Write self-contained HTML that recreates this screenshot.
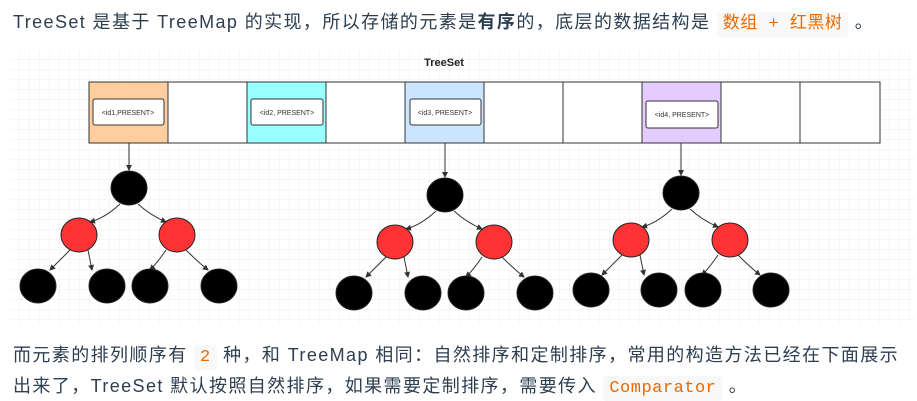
<!DOCTYPE html>
<html><head><meta charset="utf-8"><style>
body{margin:0;width:917px;height:401px;background:#fff;font-family:"Liberation Sans","Noto Sans CJK SC",sans-serif;color:#2c3e50;overflow:hidden;position:relative}
.t{position:absolute;left:13px;font-size:18px;letter-spacing:1.4px;white-space:nowrap}
code{font-family:"Liberation Mono","Noto Sans CJK SC",monospace;color:#e96900;background:#f8f8f8;padding:3px 6px;border-radius:3px;font-size:17px;letter-spacing:0.5px}
</style></head><body>
<div class="t" style="top:8px">TreeSet 是基于 TreeMap 的实现，所以存储的元素是<b>有序</b>的，底层的数据结构是 <code>数组 + 红黑树</code> 。</div>
<svg style="position:absolute;left:0;top:0" width="917" height="401">
<defs><pattern id="g" width="10" height="10" patternUnits="userSpaceOnUse"><path d="M10 0V10M0 10H10" stroke="#ececec" stroke-width="1" fill="none"/></pattern>
<marker id="a" markerWidth="6" markerHeight="6" refX="5" refY="3" orient="auto"><path d="M0,0L6,3L0,6z" fill="#333"/></marker></defs>
<rect x="10" y="51" width="905" height="272" fill="url(#g)"/>
<text x="444" y="66" font-size="11" font-weight="bold" text-anchor="middle" fill="#222" font-family="Liberation Sans">TreeSet</text>
<g stroke="#333" stroke-width="1">
<rect x="89" y="82" width="79" height="61" fill="#ffce9f"/>
<rect x="168" y="82" width="79" height="61" fill="#fff"/>
<rect x="247" y="82" width="79" height="61" fill="#99ffff"/>
<rect x="326" y="82" width="79" height="61" fill="#fff"/>
<rect x="405" y="82" width="79" height="61" fill="#cce5ff"/>
<rect x="484" y="82" width="79" height="61" fill="#fff"/>
<rect x="563" y="82" width="79" height="61" fill="#fff"/>
<rect x="642" y="82" width="79" height="61" fill="#e5ccff"/>
<rect x="721" y="82" width="79" height="61" fill="#fff"/>
<rect x="800" y="82" width="80" height="61" fill="#fff"/>
<rect x="93" y="99" width="71" height="26" rx="2" fill="#fff"/>
<rect x="251" y="99" width="72" height="26" rx="2" fill="#fff"/>
<rect x="410" y="99" width="71" height="26" rx="2" fill="#fff"/>
<rect x="646" y="101" width="72" height="27" rx="2" fill="#fff"/>
</g>
<g font-size="7" fill="#333" text-anchor="middle" font-family="Liberation Sans">
<text x="128" y="115">&lt;id1,PRESENT&gt;</text>
<text x="287" y="115">&lt;id2, PRESENT&gt;</text>
<text x="445" y="115">&lt;id3, PRESENT&gt;</text>
<text x="682" y="117">&lt;id4, PRESENT&gt;</text>
</g>
<g stroke="#333" stroke-width="1" fill="none" marker-end="url(#a)">
<path d="M129 143V170"/><path d="M445 143V177"/><path d="M681 143V175"/>
<path d="M120 204Q105 218 90 222"/><path d="M138 204Q150 215 166 222"/>
<path d="M70 250Q58 262 50 270"/><path d="M88 250Q90 260 92 270"/>
<path d="M166 250Q158 262 150 270"/><path d="M186 250Q198 262 208 270"/>
<path d="M436 211Q421 225 406 229"/><path d="M454 211Q466 222 482 229"/>
<path d="M386 257Q374 269 366 277"/><path d="M404 257Q406 267 408 277"/>
<path d="M482 257Q474 269 466 277"/><path d="M502 257Q514 269 524 277"/>
<path d="M672 209Q657 223 642 227"/><path d="M690 209Q702 220 718 227"/>
<path d="M622 255Q610 267 602 275"/><path d="M640 255Q642 265 644 275"/>
<path d="M718 255Q710 267 702 275"/><path d="M738 255Q750 267 760 275"/>
</g>
<g stroke="#222" stroke-width="1">
<ellipse cx="129" cy="188" rx="18" ry="17" fill="#000"/>
<ellipse cx="79" cy="235" rx="18" ry="17" fill="#f33"/>
<ellipse cx="177" cy="235" rx="18" ry="17" fill="#f33"/>
<ellipse cx="38" cy="286" rx="18" ry="17" fill="#000"/>
<ellipse cx="107" cy="286" rx="18" ry="17" fill="#000"/>
<ellipse cx="150" cy="286" rx="18" ry="17" fill="#000"/>
<ellipse cx="219" cy="286" rx="18" ry="17" fill="#000"/>
<ellipse cx="445" cy="195" rx="18" ry="17" fill="#000"/>
<ellipse cx="395" cy="242" rx="18" ry="17" fill="#f33"/>
<ellipse cx="494" cy="242" rx="18" ry="17" fill="#f33"/>
<ellipse cx="354" cy="293" rx="18" ry="17" fill="#000"/>
<ellipse cx="423" cy="293" rx="18" ry="17" fill="#000"/>
<ellipse cx="466" cy="293" rx="18" ry="17" fill="#000"/>
<ellipse cx="535" cy="293" rx="18" ry="17" fill="#000"/>
<ellipse cx="681" cy="193" rx="18" ry="17" fill="#000"/>
<ellipse cx="631" cy="240" rx="18" ry="17" fill="#f33"/>
<ellipse cx="730" cy="240" rx="18" ry="17" fill="#f33"/>
<ellipse cx="591" cy="290" rx="18" ry="17" fill="#000"/>
<ellipse cx="659" cy="290" rx="18" ry="17" fill="#000"/>
<ellipse cx="703" cy="290" rx="18" ry="17" fill="#000"/>
<ellipse cx="771" cy="290" rx="18" ry="17" fill="#000"/>
</g>
</svg>
<div class="t" style="top:341px">而元素的排列顺序有 <code>2</code> 种，和 TreeMap 相同：自然排序和定制排序，常用的构造方法已经在下面展示</div>
<div class="t" style="top:372px">出来了，TreeSet 默认按照自然排序，如果需要定制排序，需要传入 <code>Comparator</code> 。</div>
</body></html>
